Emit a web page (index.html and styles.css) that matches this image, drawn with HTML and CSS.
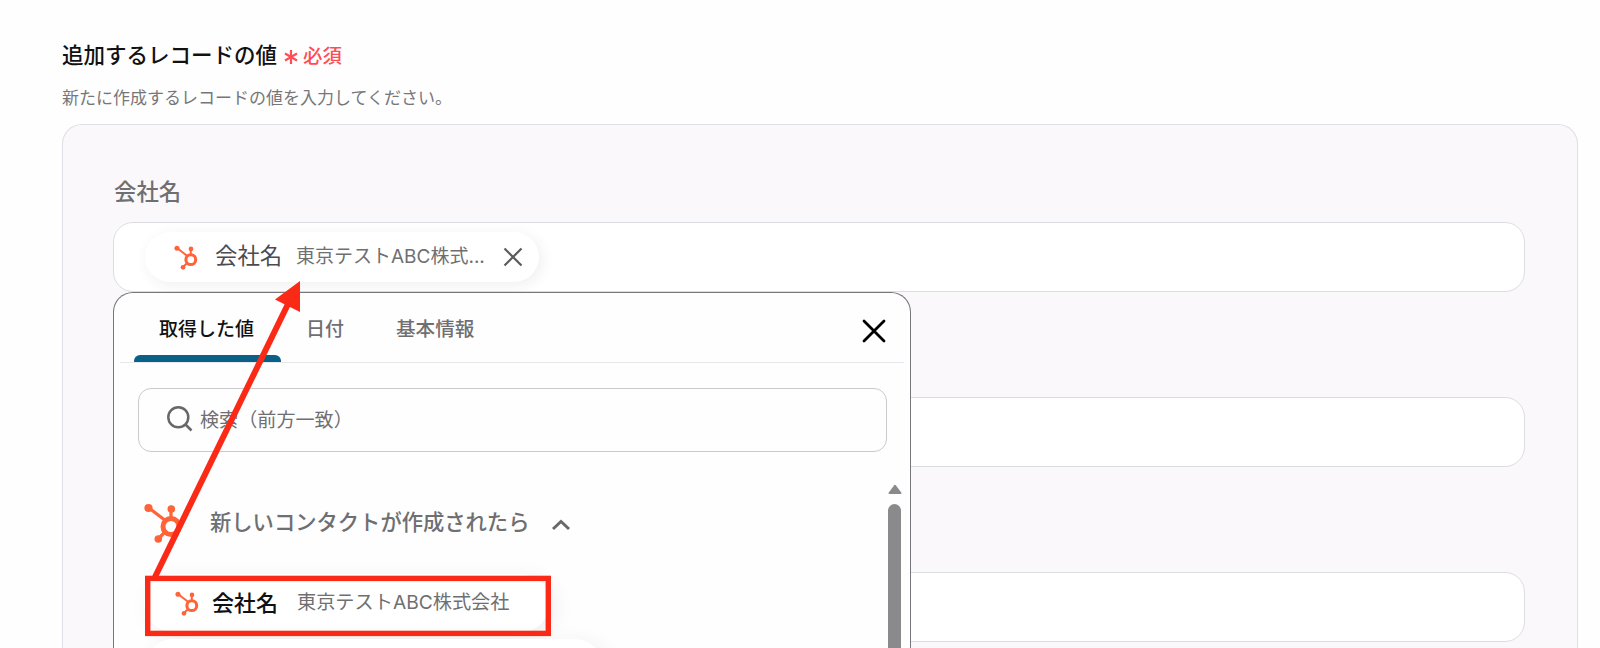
FILE: index.html
```
<!DOCTYPE html>
<html lang="ja">
<head>
  <meta charset="UTF-8">
  <meta name="viewport" content="width=device-width, initial-scale=1">
  <title>追加するレコードの値</title>
  <link rel="stylesheet" href="styles.css">
</head>
<body>
  <svg width="0" height="0" class="sprite">
    <symbol id="hubspot" viewBox="0 0 40 44">
      <g stroke="#ff6338" fill="none">
        <path d="M5 7 L22 20" stroke-width="3.2"/>
        <path d="M27 8 V18" stroke-width="3.2"/>
        <path d="M14 38 L21 31" stroke-width="3.2"/>
        <circle cx="27" cy="25.5" r="8" stroke-width="5"/>
      </g>
      <g fill="#ff6338">
        <circle cx="4.5" cy="7" r="4.1"/>
        <circle cx="27.3" cy="8" r="3.8"/>
        <circle cx="14.3" cy="38" r="3.8"/>
      </g>
    </symbol>
  </svg>

  <div class="form-head">
    <h1 class="title">追加するレコードの値</h1>
    <svg class="asterisk" viewBox="0 0 16 16"><path d="M8 1 V15 M2 4.5 L14 11.5 M14 4.5 L2 11.5"/></svg>
    <span class="required">必須</span>
  </div>
  <p class="description">新たに作成するレコードの値を入力してください。</p>

  <div class="panel">
    <div class="label">会社名</div>
    <div class="field">
      <div class="chip">
        <svg class="chip-icon"><use href="#hubspot"/></svg>
        <span class="chip-name">会社名</span>
        <span class="chip-value">東京テストABC株式...</span>
        <svg class="chip-close" viewBox="0 0 20 20"><path d="M1.5 1.5 L18.5 18.5 M18.5 1.5 L1.5 18.5"/></svg>
      </div>
    </div>
    <div class="field"></div>
    <div class="field"></div>

    <div class="dropdown">
      <div class="tabs">
        <div class="tab active">取得した値</div>
        <div class="tab">日付</div>
        <div class="tab wide">基本情報</div>
        <svg class="close" viewBox="0 0 24 24"><path d="M2 2 L22 22 M22 2 L2 22"/></svg>
      </div>
      <div class="search">
        <svg class="search-icon" viewBox="0 0 26 26"><circle cx="11.3" cy="11.3" r="10"/><path d="M18.5 18.5 L24.5 24.5"/></svg>
        <span>検索（前方一致）</span>
      </div>
      <div class="results">
        <div class="list">
          <div class="group">
            <svg class="group-icon"><use href="#hubspot"/></svg>
            <span>新しいコンタクトが作成されたら</span>
            <svg class="chevron" viewBox="0 0 20 12"><path d="M2 10 L10 2.5 L18 10"/></svg>
          </div>
          <div class="item">
            <svg class="chip-icon"><use href="#hubspot"/></svg>
            <span class="item-name">会社名</span>
            <span class="item-value">東京テストABC株式会社</span>
          </div>
          <div class="item next"></div>
        </div>
        <div class="scrollbar">
          <svg viewBox="0 0 14 10"><path d="M1.5 9 L7 1.8 L12.5 9 Z"/></svg>
          <div class="thumb"></div>
        </div>
      </div>
    </div>
  </div>

  <!-- annotation over the form -->
  <svg class="annotation" viewBox="0 0 1600 648">
    <rect x="147.7" y="578.4" width="400.6" height="55" fill="none" stroke-width="5.4"/>
    <path d="M155 577 L289 302" stroke-width="6"/>
    <path class="head" d="M300 281 L275 299.5 L300 312 Z"/>
  </svg>
</body>
</html>
```

FILE: styles.css
```
* {
  box-sizing: border-box;
}
body {
  font-family: "Noto Sans CJK JP", sans-serif;
  background-color: #fefefe;
  color: #6f6f72;
  margin: 0;
  padding: 0 22px 0 62px;
  height: 648px;
  overflow: hidden;
  position: relative;
}
svg {
  display: block;
  flex: none;
}
.sprite {
  position: absolute;
}
span {
  white-space: nowrap;
}
.form-head {
  display: flex;
  align-items: center;
  height: 36px;
  margin-top: 36px;
}
.title {
  margin: 0;
  width: 221px;
  font-size: 21.5px;
  font-weight: 500;
  line-height: 34px;
  color: #111;
}
.asterisk {
  width: 16px;
  height: 16px;
  margin-top: 6px;
  fill: none;
  stroke: #ff4d55;
  stroke-width: 2.2;
}
.required {
  margin-left: 4px;
  font-size: 19.4px;
  font-weight: 500;
  line-height: 36px;
  padding-top: 2px;
  color: #ff4d55;
}
.description {
  margin: 10px 0 0;
  font-size: 17px;
  line-height: 30px;
  color: #77777a;
}
.panel {
  position: relative;
  height: 524px;
  margin-top: 12px;
  padding: 45px 52px 0 50px;
  overflow: hidden;
  background-color: #faf8fb;
  border: 1px solid #e0dfe6;
  border-bottom: 0;
  border-radius: 20px 20px 0 0;
}
.label {
  height: 52px;
  padding-left: 1px;
  font-size: 22.4px;
  font-weight: 500;
  line-height: 40px;
}
.field {
  height: 70px;
  margin-bottom: 105px;
  padding: 9px 0 0 31px;
  background-color: #fff;
  border: 1px solid #dcdde3;
  border-radius: 20px;
}
.chip {
  display: flex;
  align-items: center;
  width: 394px;
  height: 50px;
  padding-left: 29px;
  background-color: #fff;
  border-radius: 25px;
  box-shadow: 3px 3px 14px rgba(60, 50, 80, 0.08);
}
.chip-icon {
  width: 25px;
  height: 27px;
}
.chip-name {
  width: 81px;
  margin-left: 16px;
  margin-top: -6px;
  font-size: 22.4px;
  color: #4c4c50;
}
.chip-value {
  width: 207px;
  margin-top: -5px;
  font-family: Inter, "Noto Sans CJK JP", sans-serif;
  font-size: 19px;
}
.chip-close {
  width: 20px;
  height: 20px;
  fill: none;
  stroke: #5c5c60;
  stroke-width: 2.2;
}
.dropdown {
  position: absolute;
  left: 50px;
  top: 167px;
  width: 798px;
  height: 356px;
  overflow: hidden;
  background-color: #fefefe;
  border: 1px solid #77777b;
  border-bottom: 0;
  border-radius: 20px 20px 0 0;
}
.tabs {
  display: flex;
  height: 70px;
  margin: 0 6px;
  padding-left: 14px;
  border-bottom: 1px solid #e8e8ec;
}
.tab {
  height: 69px;
  margin-right: 52px;
  font-size: 19px;
  font-weight: 500;
  line-height: 69px;
}
.tab.active {
  position: relative;
  width: 147px;
  margin-right: 25px;
  padding-left: 25px;
  color: #111;
}
.tab.active::after {
  content: "";
  position: absolute;
  left: 0;
  bottom: 0;
  width: 100%;
  height: 7px;
  background-color: #0b6088;
  border-radius: 6px 6px 0 0;
}
.tab.wide {
  font-size: 19.6px;
}
.close {
  width: 24px;
  height: 24px;
  margin: 26px 18px 0 auto;
  fill: none;
  stroke: #000;
  stroke-width: 2.8;
  stroke-linecap: round;
}
.search {
  display: flex;
  align-items: center;
  height: 64px;
  margin: 25px 23px 0 24px;
  padding-left: 28px;
  font-size: 19.1px;
  border: 1px solid #c9c9ce;
  border-radius: 13px;
}
.search span {
  margin-top: -2px;
}
.search-icon {
  width: 26px;
  height: 26px;
  margin-right: 7px;
  margin-top: -3px;
  fill: none;
  stroke: #68686b;
  stroke-width: 2.5;
}
.results {
  display: flex;
  justify-content: space-between;
}
.list {
  padding: 48px 0 0 30px;
}
.group {
  display: flex;
  align-items: center;
  height: 46px;
  font-size: 21.3px;
  font-weight: 500;
}
.group span {
  margin-top: -5px;
}
.group-icon {
  width: 40px;
  height: 44px;
  margin-right: 26px;
}
.chevron {
  width: 20px;
  height: 12px;
  margin-left: 22px;
  margin-top: 3px;
  fill: none;
  stroke: #68686b;
  stroke-width: 3;
}
.item {
  display: flex;
  align-items: center;
  width: 406px;
  height: 58px;
  margin-top: 28px;
  padding-left: 31px;
  background-color: #fff;
  border-radius: 29px;
  box-shadow: 5px 4px 20px rgba(60, 50, 80, 0.08);
}
.item.next {
  width: 460px;
  margin-top: 7px;
}
.item-name {
  width: 85px;
  margin-left: 12px;
  margin-top: -4px;
  font-size: 22px;
  font-weight: 500;
  color: #111;
}
.item-value {
  margin-top: -4px;
  font-family: Inter, "Noto Sans CJK JP", sans-serif;
  font-size: 19.2px;
}
.scrollbar {
  width: 14px;
  margin: 32px 8px 0 0;
}
.scrollbar svg {
  width: 14px;
  height: 10px;
  fill: #8a898c;
  stroke: #8a898c;
  stroke-width: 2;
  stroke-linejoin: round;
}
.thumb {
  width: 13px;
  height: 160px;
  margin-top: 10px;
  background-color: #8a898c;
  border-radius: 7px 7px 0 0;
}
.annotation {
  position: absolute;
  left: 0;
  top: 0;
  width: 1600px;
  height: 648px;
  stroke: #fb2a17;
}
.annotation .head {
  fill: #fb2a17;
  stroke: none;
}
```
